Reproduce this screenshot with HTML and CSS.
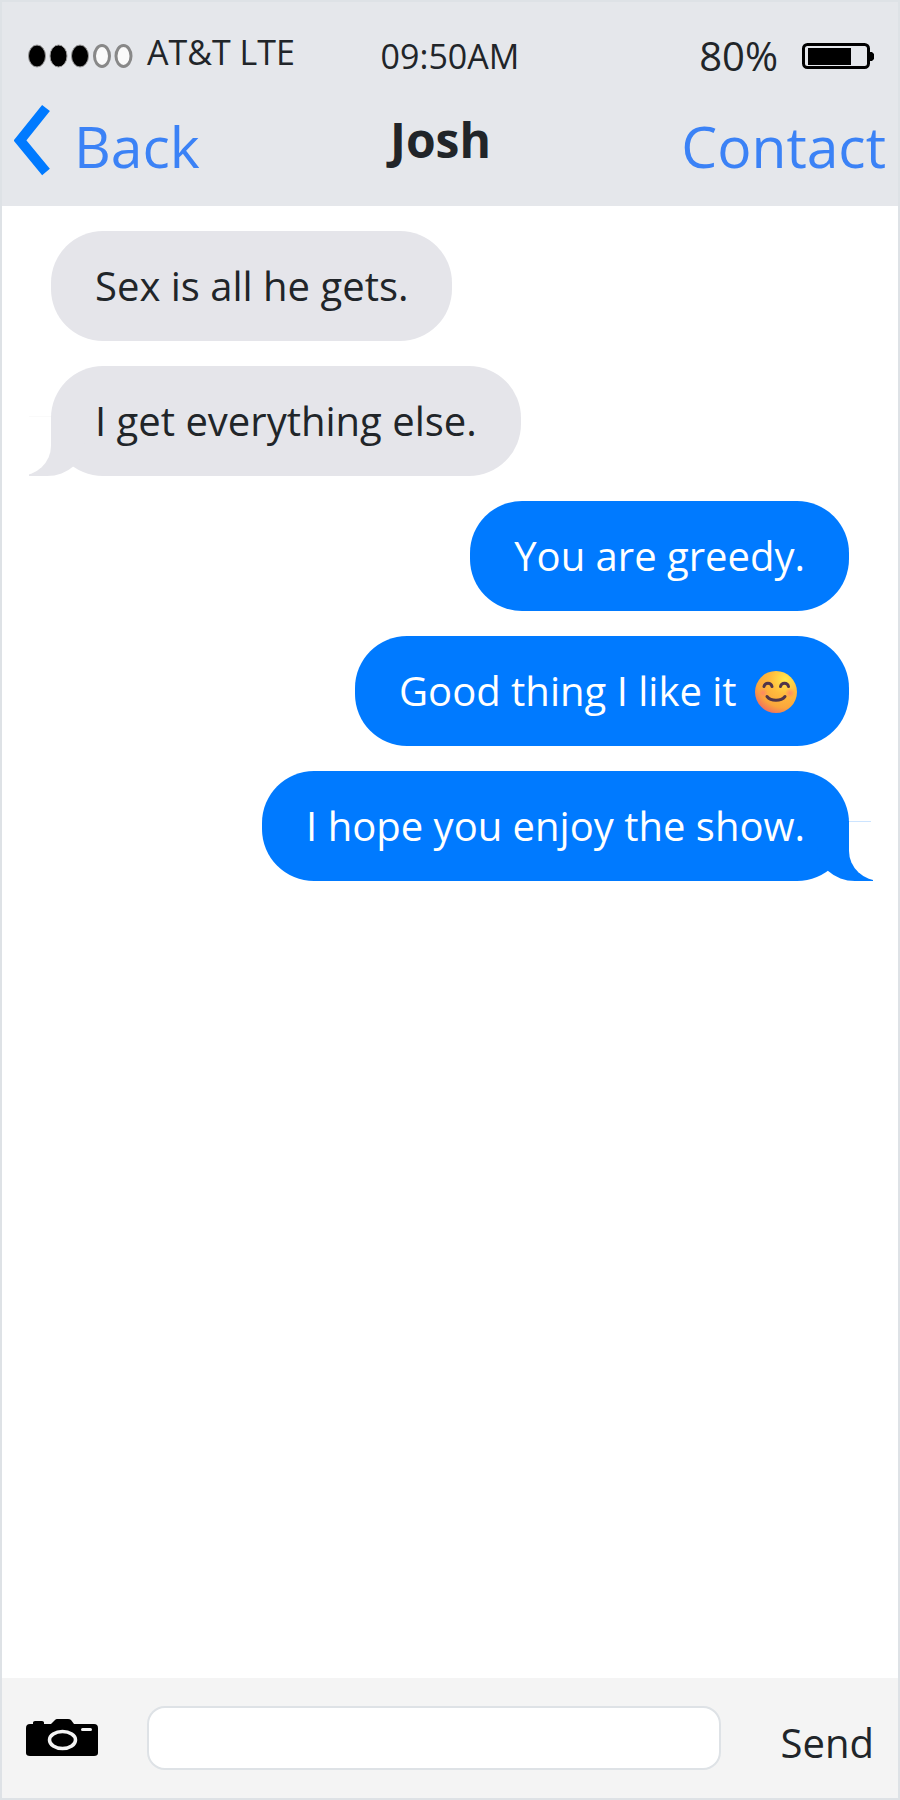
FILE: index.html
```html
<!DOCTYPE html>
<html lang="en">
<head>
  <meta charset="UTF-8">
  <meta name="viewport" content="width=device-width, initial-scale=1.0">
  <title>Messages</title>

  <link rel="stylesheet" href="styles.css">
</head>
<body>
  <div class="phone">
    <header class="header">
      <div class="status">
        <div class="carrier">
          <svg class="signal" viewBox="0 0 107 24" aria-hidden="true">
            <g fill="#000" stroke="#999" stroke-width="1">
              <ellipse cx="11" cy="12" rx="8.5" ry="11" />
              <ellipse cx="32.500" cy="12" rx="8.5" ry="11" />
              <ellipse cx="54" cy="12" rx="8.5" ry="11" />
            </g>
            <g fill="#fafafa" stroke="#888" stroke-width="3">
              <ellipse cx="76" cy="12" rx="7.5" ry="10.500" />
              <ellipse cx="97.500" cy="12" rx="7.5" ry="10.500" />
            </g>
          </svg>
          <span>AT&amp;T LTE</span>
        </div>
        <time class="time">09:50AM</time>
        <div class="power">
          <span>80%</span>
          <svg class="battery" viewBox="0 0 72 26" aria-hidden="true">
            <rect x="1.500" y="1.500" width="65" height="23" rx="4" fill="none" stroke="#000" stroke-width="3" />
            <rect x="6" y="5" width="43" height="17" />
            <path d="M67 9h3l2 2v5l-2 2h-3z" />
          </svg>
        </div>
      </div>

      <nav class="nav">
        <a class="nav-link back" href="#">
          <svg class="chevron" viewBox="0 0 36 72" aria-hidden="true">
            <path d="M32 4 6 36.500 32 68" fill="none" stroke="#007aff" stroke-width="10" />
          </svg>
          Back
        </a>
        <h1 class="name">Josh</h1>
        <a class="nav-link" href="#">Contact</a>
      </nav>
    </header>

    <main class="messages">
      <p class="bubble received">Sex is all he gets.</p>
      <p class="bubble received tail">I get everything else.</p>
      <p class="bubble sent">You are greedy.</p>
      <p class="bubble sent">
        Good thing I like it
        <svg class="emoji" viewBox="0 0 42 42" role="img" aria-label="Smiling face">
          <defs>
            <radialGradient id="face" cx="0.72" cy="0.2" r="0.9">
              <stop offset="0" stop-color="#ffe94d" />
              <stop offset="0.4" stop-color="#ffbb3d" />
              <stop offset="0.75" stop-color="#fba63c" />
              <stop offset="1" stop-color="#ef6a63" />
            </radialGradient>
            <radialGradient id="cheek">
              <stop offset="0" stop-color="#ff7a75" stop-opacity="0.7" />
              <stop offset="1" stop-color="#ff7a75" stop-opacity="0" />
            </radialGradient>
          </defs>
          <circle cx="21" cy="21" r="21" fill="url(#face)" />
          <circle cx="8" cy="22" r="5" fill="url(#cheek)" />
          <circle cx="35" cy="22" r="5" fill="url(#cheek)" />
          <g fill="none" stroke="#50354a" stroke-width="3" stroke-linecap="round">
            <path d="M9 15.500c1-4.500 7-4.500 8 0M25.500 15.500c1-4.500 7-4.500 8 0" />
            <path d="M12 25.500c4 5 14 5 18 0" />
          </g>
        </svg>
      </p>
      <p class="bubble sent tail">I hope you enjoy the show.</p>
    </main>

    <form class="composer">
      <button class="camera" type="button" aria-label="Camera">
        <svg viewBox="0 0 72 38" aria-hidden="true">
          <path d="M7 5V3.500Q7 2 9 2h7q2 0 2 1.500V5h7l4-4q1-1 2-1h11q2 0 3 1l3 4h20q4 0 4 4v25q0 3-4 3H4q-4 0-4-3V9q0-4 4-4z" />
          <ellipse cx="36.500" cy="21" rx="13" ry="8.500" fill="#000" stroke="#f4f4f4" stroke-width="3.500" />
          <rect x="55" y="9" width="11" height="3" rx="1.500" fill="#f4f4f4" />
        </svg>
      </button>
      <input class="message-input" type="text" name="message" aria-label="Message">
      <button class="send" type="button">Send</button>
    </form>
  </div>
</body>
</html>
```
FILE: styles.css
```css
* {
  box-sizing: border-box;
}

body {
  margin: 0;
  font-family: "Open Sans", "Noto Sans", sans-serif;
  color: #212529;
  background: #fff;
}

.phone {
  display: flex;
  flex-direction: column;
  min-height: 100vh;
  border: 2px solid #dee2e6;
}

/* Header */
.header {
  padding: 34px 0 30px;
  background: #e5e7eb;
}

.status {
  display: grid;
  grid-template-columns: 1fr auto 1fr;
  align-items: center;
  padding: 0 24px;
  margin-bottom: 28px;
  font-size: 34px;
  line-height: 40px;
}

.carrier {
  display: flex;
  align-items: flex-end;
  align-self: start;
  gap: 14px;
  line-height: 32px;
}

.signal {
  width: 107px;
  height: 24px;
}

.power {
  display: flex;
  align-items: center;
  justify-content: flex-end;
  gap: 24px;
  font-size: 40px;
}

.battery {
  width: 72px;
  height: 26px;
}

.nav {
  display: flex;
  justify-content: space-between;
  align-items: flex-start;
  height: 72px;
  padding: 0 12px;
}

.nav-link {
  color: #3b82f6;
  font-size: 57px;
  line-height: 84px;
  text-decoration: none;
}

.back {
  display: flex;
  align-items: flex-start;
  gap: 24px;
}

.chevron {
  width: 36px;
  height: 72px;
}

.name {
  margin: 0;
  font-size: 48px;
  font-weight: 700;
  line-height: 72px;
}

/* Conversation */
.messages {
  display: flex;
  flex: 1;
  flex-direction: column;
  align-items: flex-start;
  gap: 25px;
  padding: 25px 49px;
}

.bubble {
  position: relative;
  margin: 0;
  padding: 24px 44px;
  border-radius: 52px;
  font-size: 40px;
  line-height: 62px;
}

.received {
  background: #e5e5ea;
}

.sent {
  align-self: flex-end;
  color: #fff;
  background: #007aff;
}

.emoji {
  width: 42px;
  height: 42px;
  margin: 0 8px;
  vertical-align: -7px;
}

/* The tail is a rounded block, partly covered by a white one */
.tail::before,
.tail::after {
  content: "";
  position: absolute;
  bottom: 0;
  height: 60px;
}

.tail::before {
  width: 56px;
}

.tail::after {
  width: 32px;
  background-color: #fff;
  background-repeat: no-repeat;
  background-size: 22px 1px;
}

.received.tail::before {
  left: -22px;
  background: #e5e5ea;
  border-bottom-right-radius: 38px 34px;
}

.received.tail::after {
  right: 100%;
  background-image: linear-gradient(#fafafa, #fafafa);
  background-position: right top;
  border-bottom-right-radius: 32px 30px;
}

.sent.tail::before {
  right: -24px;
  background: #007aff;
  border-bottom-left-radius: 38px 34px;
}

.sent.tail::after {
  left: 100%;
  background-image: linear-gradient(#cce4ff, #cce4ff);
  background-position: left top;
  border-bottom-left-radius: 32px 30px;
}

/* Composer */
.composer {
  display: flex;
  align-items: center;
  padding: 28px 24px;
  background: #f4f4f4;
}

.camera,
.send {
  padding: 0;
  border: 0;
  color: inherit;
  background: none;
  font: inherit;
  cursor: pointer;
}

.camera svg {
  display: block;
  width: 72px;
  height: 38px;
}

.message-input {
  flex: 1;
  min-width: 0;
  height: 64px;
  margin: 0 60px 0 49px;
  padding: 0 20px;
  border: 2px solid #dee2e6;
  border-radius: 18px;
  background: #fff;
  font: inherit;
  font-size: 34px;
}

.send {
  align-self: flex-end;
  font-size: 40px;
  line-height: 54px;
}
```
